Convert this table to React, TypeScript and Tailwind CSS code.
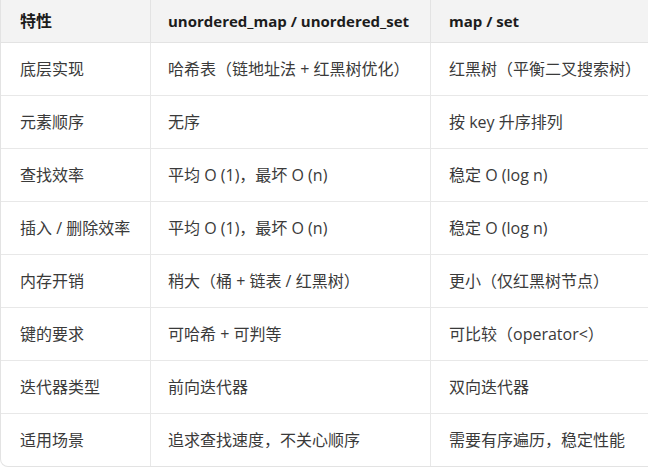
const rows: [string, string, string][] = [
  ["底层实现", "哈希表（链地址法 + 红黑树优化）", "红黑树（平衡二叉搜索树）"],
  ["元素顺序", "无序", "按 key 升序排列"],
  ["查找效率", "平均 O (1)，最坏 O (n)", "稳定 O (log n)"],
  ["插入 / 删除效率", "平均 O (1)，最坏 O (n)", "稳定 O (log n)"],
  ["内存开销", "稍大（桶 + 链表 / 红黑树）", "更小（仅红黑树节点）"],
  ["键的要求", "可哈希 + 可判等", "可比较（operator<）"],
  ["迭代器类型", "前向迭代器", "双向迭代器"],
  ["适用场景", "追求查找速度，不关心顺序", "需要有序遍历，稳定性能"],
]

export default function App() {
  return (
    <div className="w-[648px] h-[467px] overflow-hidden bg-white font-['Open_Sans','Noto_Sans_CJK_SC',sans-serif] [text-spacing-trim:space-all]">
      <div className="w-[700px] border border-t-0 border-[#e3e3e3] rounded-b-lg overflow-hidden">
        <div className="grid grid-cols-[149px_280px_1fr] h-[43px] bg-[#f3f3f3] border-b border-[#e3e3e3] font-bold text-[15px] text-[#1c1c1c]">
          <div className="flex items-center pl-[19px] text-[16px]">特性</div>
          <div className="flex items-center pl-[17px] border-l border-[#e3e3e3]">unordered_map / unordered_set</div>
          <div className="flex items-center pl-[18px] border-l border-[#e3e3e3]">map / set</div>
        </div>
        {rows.map((r, i) => (
          <div
            key={i}
            className={`grid grid-cols-[149px_280px_1fr] text-[16px] text-[#3a3a3a] ${i < rows.length - 1 ? "h-[53px] border-b border-[#e8e8e8]" : "h-[52px]"}`}
          >
            <div className="flex items-center pl-[19px]">{r[0]}</div>
            <div className="flex items-center pl-[17px] border-l border-[#e8e8e8]">{r[1]}</div>
            <div className="flex items-center pl-[18px] border-l border-[#e8e8e8]">{r[2]}</div>
          </div>
        ))}
      </div>
    </div>
  )
}
